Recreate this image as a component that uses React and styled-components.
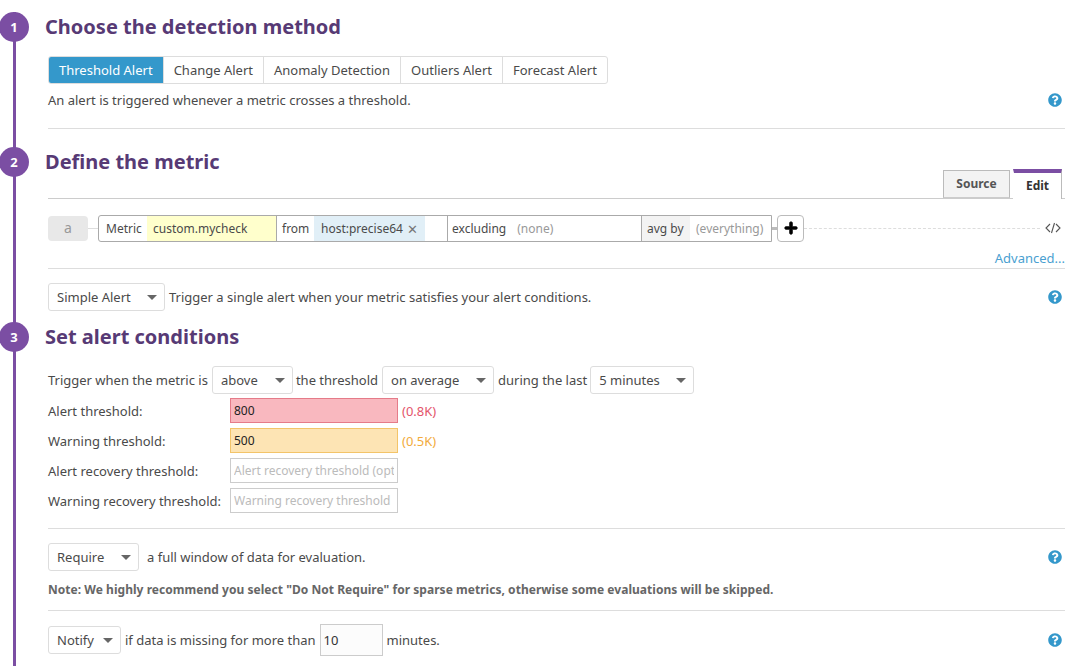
import React from 'react'
import styled, { createGlobalStyle } from 'styled-components'
import { FaQuestionCircle, FaPlus } from 'react-icons/fa'

const GlobalStyle = createGlobalStyle`
html, body {
  margin: 0;
  height: 666px;
  overflow: hidden;
  background: #fff;
}
body {
  font-family: "Noto Sans", "Open Sans", sans-serif;
  font-size: 13px;
  line-height: 18px;
  color: #4a4a4a;
}
* { box-sizing: border-box; }
`

const Timeline = styled.div`
margin: 12px 0 0 13px;
width: 1052px;
height: 654px;
padding-left: 32px;
border-left: 3px solid #7b4ea3;
`

const Heading = styled.div`
position: relative;
height: 30px;
margin-left: -3px;
margin-top: ${p => p.$top || 0}px;
display: flex;
align-items: center;
font-size: 20px;
font-weight: 700;
color: #573a75;
`

const Badge = styled.div`
position: absolute;
left: -46px;
top: 0;
width: 30px;
height: 30px;
border-radius: 50%;
background: #7b4ea3;
color: #fff;
font-size: 13px;
font-weight: 700;
display: flex;
align-items: center;
justify-content: center;
`

const ButtonGroup = styled.div`
display: inline-flex;
margin-top: 14px;
height: 28px;
border: 1px solid #ddd;
border-radius: 3px;
background: #fff;
`

const GroupButton = styled.div`
display: flex;
align-items: center;
padding: 0 10px;
color: ${p => (p.$active ? '#fff' : '#4a4a4a')};
background: ${p => (p.$active ? '#3498cb' : 'transparent')};
border-left: ${p => (p.$first ? '0' : '1px solid #ddd')};
border-radius: ${p => (p.$active ? '2px 0 0 2px' : '0')};
`

const SpacedRow = styled.div`
display: flex;
align-items: center;
justify-content: space-between;
height: ${p => p.$height || 28}px;
margin-top: ${p => p.$top || 0}px;
`

const Inline = styled.div`
display: flex;
align-items: center;
`

const HelpIcon = styled(FaQuestionCircle)`
color: #3498cb;
width: 14px;
height: 14px;
margin-right: 3px;
`

const Divider = styled.div`
height: 1px;
background: ${p => p.$dark ? '#ccc' : '#ddd'};
margin-top: ${p => p.$top || 0}px;
`

const Tabs = styled.div`
display: flex;
justify-content: flex-end;
align-items: flex-end;
gap: 3px;
height: 29px;
margin-top: -8px;
padding-right: 3px;
`

const Tab = styled.div`
display: flex;
align-items: center;
justify-content: center;
width: ${p => p.$width}px;
height: ${p => (p.$active ? 30 : 28)}px;
margin-bottom: ${p => (p.$active ? -1 : 0)}px;
position: relative;
font-size: 12px;
font-weight: 700;
color: ${p => (p.$active ? '#333' : '#555')};
background: ${p => (p.$active ? '#fff' : '#f3f3f3')};
border: 1px solid #bbb;
border-top: ${p => (p.$active ? '4px solid #7b4ea3' : '1px solid #bbb')};
border-bottom: ${p => (p.$active ? '0' : '1px solid #ccc')};
border-left-color: ${p => (p.$active ? '#fff' : '#bbb')};
`

const QueryRow = styled.div`
display: flex;
align-items: center;
margin-top: 15px;
height: 28px;
`

const QueryLabel = styled.div`
width: 40px;
height: 25px;
background: #e8e8e8;
border-radius: 4px;
display: flex;
align-items: center;
justify-content: center;
color: #999;
font-size: 14px;
`

const Connector = styled.div`
width: ${p => p.$width}px;
height: ${p => p.$thick ? 3 : 1}px;
background: ${p => p.$thick ? '#bbb' : '#ddd'};
`

const QueryBox = styled.div`
display: flex;
width: 674px;
height: 27px;
border: 1px solid #aaa;
border-radius: 3px 0 0 3px;
font-size: 12px;
`

const QueryPart = styled.div`
display: flex;
align-items: center;
flex: none;
width: ${p => p.$width}px;
padding: 1px 0 0 ${p => p.$pad ?? 6}px;
gap: ${p => p.$gap || 0}px;
background: ${p => p.$bg || 'transparent'};
border-left: ${p => p.$line ? '1px solid #aaa' : '0'};
color: ${p => p.$muted ? '#999' : '#4a4a4a'};
`

const Muted = styled.span`
color: #999;
`

const RemoveMark = styled.span`
color: #777;
font-size: 13px;
`

const PlusButton = styled.div`
width: 27px;
height: 27px;
border: 1px solid #bbb;
border-radius: 4px;
display: flex;
align-items: center;
justify-content: center;
color: #000;
font-size: 14px;
& svg {
  stroke: currentColor;
  stroke-width: 30;
}
`

const Dashed = styled.div`
flex: 1;
border-top: 1px dashed #ddd;
margin-right: 5px;
`

const CodeIcon = styled.svg`
width: 16px;
height: 12px;
margin-right: 4px;
fill: none;
stroke: #555;
stroke-width: 1.1;
`

const AdvancedLink = styled.div`
text-align: right;
color: #4a9fd1;
height: 18px;
margin-top: 7px;
`

const SelectBox = styled.div`
display: inline-flex;
align-items: center;
justify-content: space-between;
flex: none;
width: ${p => p.$width}px;
height: 28px;
padding: 0 7px 0 8px;
border: 1px solid #ddd;
border-radius: 3px;
background: #fff;
margin-right: ${p => p.$right ?? 4}px;
margin-left: ${p => p.$left || 0}px;
`

const Caret = styled.span`
width: 0;
height: 0;
border-left: 5px solid transparent;
border-right: 5px solid transparent;
border-top: 5px solid #666;
`

const ThresholdRow = styled.div`
display: flex;
align-items: center;
height: 25px;
margin-top: ${p => p.$top ?? 5}px;
`

const ThresholdLabel = styled.div`
width: 182px;
white-space: nowrap;
`

const ThresholdInput = styled.input`
width: 168px;
height: 25px;
padding: 0 3px;
font: inherit;
font-size: 12px;
color: #222;
background: ${p => p.$bg || '#fff'};
border: 1px solid ${p => p.$border || '#ccc'};
outline: 0;
&::placeholder { color: #bbb; opacity: 1; }
`

const Scaled = styled.span`
margin-left: 4px;
color: ${p => p.$color};
`

const Note = styled.div`
margin-top: 10px;
font-size: 12px;
font-weight: 700;
letter-spacing: .035px;
color: #666;
`

const MinutesInput = styled.input`
width: 63px;
height: 32px;
margin: 0 4px;
padding: 0 3px;
font: inherit;
color: #333;
background: #fcfcfc;
border: 1px solid #ccc;
outline: 0;
`

const Select = ({ label, width, right, left }) => (
  <SelectBox $width={width} $right={right} $left={left}>
    {label}
    <Caret />
  </SelectBox>
)

export default function App() {
  return (
    <>
      <GlobalStyle />
      <Timeline>
        <Heading><Badge>1</Badge>Choose the detection method</Heading>
        <ButtonGroup>
          <GroupButton $first $active>Threshold Alert</GroupButton>
          <GroupButton>Change Alert</GroupButton>
          <GroupButton>Anomaly Detection</GroupButton>
          <GroupButton>Outliers Alert</GroupButton>
          <GroupButton>Forecast Alert</GroupButton>
        </ButtonGroup>
        <SpacedRow $height={18} $top={7}>
          <span>An alert is triggered whenever a metric crosses a threshold.</span>
          <HelpIcon />
        </SpacedRow>
        <Divider $top={19} />

        <Heading $top={18}><Badge>2</Badge>Define the metric</Heading>
        <Tabs>
          <Tab $width={67}>Source</Tab>
          <Tab $width={49} $active>Edit</Tab>
        </Tabs>
        <Divider $dark />

        <QueryRow>
          <QueryLabel>a</QueryLabel>
          <Connector $width={10} />
          <QueryBox>
            <QueryPart $width={48} $pad={7}>Metric</QueryPart>
            <QueryPart $width={129} $bg="#ffffcc">custom.mycheck</QueryPart>
            <QueryPart $width={38} $line $pad={5}>from</QueryPart>
            <QueryPart $width={111} $bg="#e1eff7" $pad={7} $gap={4}>host:precise64 <RemoveMark>✕</RemoveMark></QueryPart>
            <QueryPart $width={22} />
            <QueryPart $width={194} $line $pad={4} $gap={11}>excluding <Muted>(none)</Muted></QueryPart>
            <QueryPart $width={49} $line $bg="#f3f3f3" $pad={5}>avg by</QueryPart>
            <QueryPart $width={81} $muted>(everything)</QueryPart>
          </QueryBox>
          <Connector $width={5} $thick />
          <PlusButton><FaPlus /></PlusButton>
          <Dashed />
          <CodeIcon viewBox="0 0 16 12"><path d="M5 2 1 6l4 4M11 2l4 4-4 4M9.5 1 6.5 11" /></CodeIcon>
        </QueryRow>
        <AdvancedLink>Advanced...</AdvancedLink>
        <Divider $top={1} />

        <SpacedRow $top={14}>
          <Inline><Select label="Simple Alert" width={117} />Trigger a single alert when your metric satisfies your alert conditions.</Inline>
          <HelpIcon />
        </SpacedRow>

        <Heading $top={11}><Badge>3</Badge>Set alert conditions</Heading>

        <SpacedRow $top={14}>
          <Inline>
            Trigger when the metric is
            <Select label="above" width={81} left={4} right={3} />
            the threshold
            <Select label="on average" width={112} left={4} right={4} />
            during the last
            <Select label="5 minutes" width={104} left={3} />
          </Inline>
        </SpacedRow>
        <ThresholdRow $top={4}>
          <ThresholdLabel>Alert threshold:</ThresholdLabel>
          <ThresholdInput defaultValue="800" $bg="#f9b8bf" $border="#e57b89" />
          <Scaled $color="#e4556b">(0.8K)</Scaled>
        </ThresholdRow>
        <ThresholdRow>
          <ThresholdLabel>Warning threshold:</ThresholdLabel>
          <ThresholdInput defaultValue="500" $bg="#fde4b4" $border="#f3c469" />
          <Scaled $color="#f2ab3c">(0.5K)</Scaled>
        </ThresholdRow>
        <ThresholdRow>
          <ThresholdLabel>Alert recovery threshold:</ThresholdLabel>
          <ThresholdInput placeholder="Alert recovery threshold (optional)" />
        </ThresholdRow>
        <ThresholdRow>
          <ThresholdLabel>Warning recovery threshold:</ThresholdLabel>
          <ThresholdInput placeholder="Warning recovery threshold" />
        </ThresholdRow>
        <Divider $top={15} />

        <SpacedRow $top={14}>
          <Inline><Select label="Require" width={91} right={8} />a full window of data for evaluation.</Inline>
          <HelpIcon />
        </SpacedRow>
        <Note>Note: We highly recommend you select "Do Not Require" for sparse metrics, otherwise some evaluations will be skipped.</Note>
        <Divider $top={11} />

        <SpacedRow $top={13} $height={32}>
          <Inline>
            <Select label="Notify" width={73} />
            if data is missing for more than
            <MinutesInput defaultValue="10" />
            minutes.
          </Inline>
          <HelpIcon />
        </SpacedRow>
      </Timeline>
    </>
  )
}
